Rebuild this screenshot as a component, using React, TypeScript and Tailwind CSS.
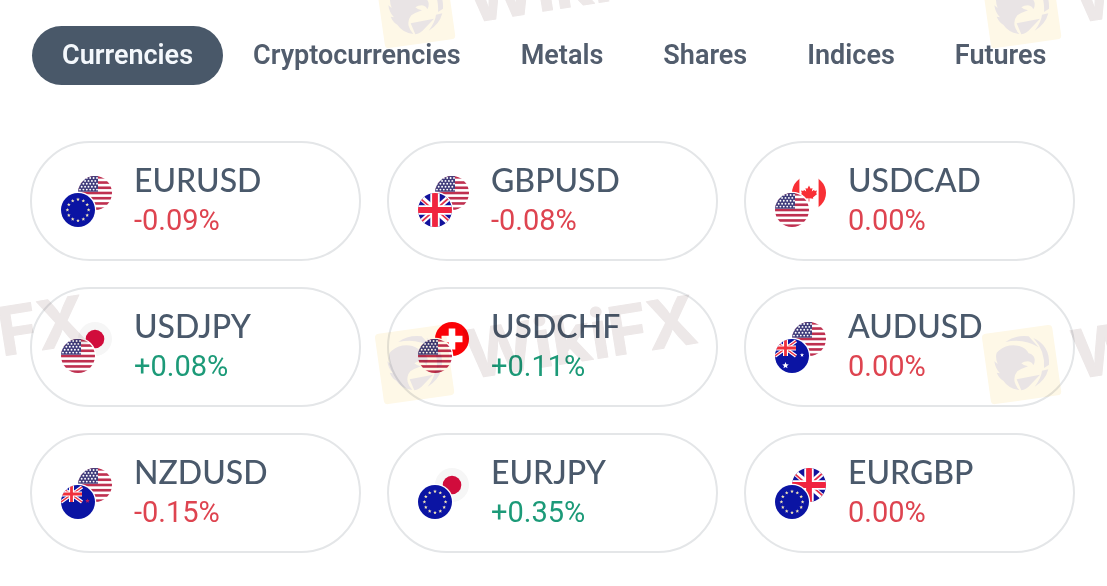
import { useId, useState, type ReactNode } from "react";

type FlagCode = "us" | "eu" | "gb" | "ca" | "jp" | "ch" | "au" | "nz";

const tabs = ["Currencies", "Cryptocurrencies", "Metals", "Shares", "Indices", "Futures"];

const pairs: { name: string; change: string; front: FlagCode; back: FlagCode }[] = [
  { name: "EURUSD", change: "-0.09%", front: "eu", back: "us" },
  { name: "GBPUSD", change: "-0.08%", front: "gb", back: "us" },
  { name: "USDCAD", change: "0.00%", front: "us", back: "ca" },
  { name: "USDJPY", change: "+0.08%", front: "us", back: "jp" },
  { name: "USDCHF", change: "+0.11%", front: "us", back: "ch" },
  { name: "AUDUSD", change: "0.00%", front: "au", back: "us" },
  { name: "NZDUSD", change: "-0.15%", front: "nz", back: "us" },
  { name: "EURJPY", change: "+0.35%", front: "eu", back: "jp" },
  { name: "EURGBP", change: "0.00%", front: "eu", back: "gb" },
];

function star(cx: number, cy: number, r: number) {
  return Array.from({ length: 10 }, (_, i) => {
    const a = (Math.PI * i) / 5 - Math.PI / 2;
    const d = i % 2 ? r * 0.45 : r;
    return `${(cx + d * Math.cos(a)).toFixed(2)},${(cy + d * Math.sin(a)).toFixed(2)}`;
  }).join(" ");
}

function UnionCanton() {
  return (
    <>
      <path d="M0 2L21 17M21 2L0 17" stroke="#fff" strokeWidth="3.4" />
      <path d="M0 2L21 17M21 2L0 17" stroke="#ee3344" strokeWidth="1.5" />
      <path d="M10.5 0V17M0 9H21" stroke="#fff" strokeWidth="5" />
      <path d="M10.5 0V17M0 9H21" stroke="#f0303c" strokeWidth="2.8" />
    </>
  );
}

const flags: Record<FlagCode, ReactNode> = {
  us: (
    <>
      <rect width="34" height="34" fill="#fff" />
      {[0, 1, 2, 3, 4, 5, 6].map((i) => (
        <rect key={i} y={i * 5.23} width="34" height="2.62" fill="#bf3050" />
      ))}
      <rect width="20" height="15.7" fill="#413d7c" />
      {[0, 1, 2, 3, 4].map((row) =>
        [0, 1, 2, 3, 4, 5].map((col) => (
          <circle key={`${row}-${col}`} cx={2 + col * 3.4 - (row % 2 ? 1.7 : 0)} cy={2 + row * 2.9} r="0.95" fill="#fff" />
        )),
      )}
    </>
  ),
  eu: (
    <>
      <rect width="34" height="34" fill="#0b14a3" />
      {Array.from({ length: 12 }, (_, i) => (
        <polygon
          key={i}
          points={star(17 + 10.6 * Math.sin((i * Math.PI) / 6), 17 - 10.6 * Math.cos((i * Math.PI) / 6), 1.9)}
          fill="#f3e6b8"
        />
      ))}
    </>
  ),
  gb: (
    <>
      <rect width="34" height="34" fill="#12129c" />
      <path d="M0 2L34 32M34 2L0 32" stroke="#fff" strokeWidth="5.6" />
      <path d="M0 3.4L15 16.6M19 15.4L34 2.2M34 30.6L19 17.4M15 18.6L0 31.8" stroke="#e5304a" strokeWidth="1.8" />
      <path d="M17 0V34M0 17H34" stroke="#fff" strokeWidth="9.4" />
      <path d="M17 0V34M0 17H34" stroke="#f02440" strokeWidth="5.8" />
    </>
  ),
  ca: (
    <>
      <rect width="34" height="34" fill="#fff" />
      <rect width="7.4" height="34" fill="#f82f35" />
      <rect x="26.6" width="7.4" height="34" fill="#f82f35" />
      <path
        d="M17 9.6L18.7 12.8L20.5 11.9L19.8 15.6L22.1 13.8L22.6 15L25 14.6L24.1 17.2L25.2 18L20.9 21.4L21.3 22.7L17.4 22.2V25.4H16.6V22.2L12.7 22.7L13.1 21.4L8.8 18L9.9 17.2L9 14.6L11.4 15L11.9 13.8L14.2 15.6L13.5 11.9L15.3 12.8Z"
        fill="#f82f35"
      />
    </>
  ),
  jp: (
    <>
      <rect width="34" height="34" fill="#f6f6f6" />
      <circle cx="17" cy="17" r="9.3" fill="#d10c3c" />
    </>
  ),
  ch: (
    <>
      <rect width="34" height="34" fill="#fb0207" />
      <path d="M17 6.5V27.5M6.5 17H27.5" stroke="#fff" strokeWidth="6.6" />
    </>
  ),
  au: (
    <>
      <rect width="34" height="34" fill="#0b14a3" />
      <UnionCanton />
      <polygon points={star(10.5, 26.5, 3.4)} fill="#fff" />
      <polygon points={star(27, 16, 2.1)} fill="#fff" />
    </>
  ),
  nz: (
    <>
      <rect width="34" height="34" fill="#0b14a3" />
      <UnionCanton />
      <polygon points={star(26.5, 15.8, 2.4)} fill="#b01c5c" />
    </>
  ),
};

function PairIcon({ front, back }: { front: FlagCode; back: FlagCode }) {
  const id = useId();
  return (
    <svg viewBox="0 0 51 51" className="size-[51px] shrink-0" aria-hidden="true">
      <clipPath id={id}>
        <circle cx="17" cy="17" r="17" />
      </clipPath>
      <g transform="translate(17 0)">
        <g clipPath={`url(#${id})`}>{flags[back]}</g>
      </g>
      <circle cx="17" cy="34" r="18.3" fill="#fff" />
      <g transform="translate(0 17)">
        <g clipPath={`url(#${id})`}>{flags[front]}</g>
      </g>
    </svg>
  );
}

function Watermark({ className }: { className: string }) {
  return (
    <svg
      viewBox="0 0 340 150"
      className={`pointer-events-none absolute h-[150px] w-[340px] mix-blend-multiply ${className}`}
      aria-hidden="true"
    >
      <rect x="9" y="60" width="71" height="71" rx="4" fill="#fef8e7" transform="rotate(-8 45 95)" />
      <g transform="translate(45 95) scale(0.3333) translate(-814 -254)" fill="#e9e4e5">
        <path d="M764 188Q794 166 834 171L864 204Q820 176 764 188Z" />
        <path d="M848 176Q898 198 895 256L880 266Q884 214 848 176Z" />
        <path d="M893 270Q884 304 852 322Q872 296 874 274Z" />
        <path d="M798 300L868 286L838 318Q826 332 812 333Z" />
        <path d="M744 214Q772 192 806 200Q826 206 834 222Q850 226 852 240Q853 250 848 258Q844 248 832 246Q820 246 812 252Q820 260 832 261Q812 268 800 276Q788 290 792 308Q796 322 806 332Q774 328 758 304Q746 298 738 280L748 282Q734 268 731 246L741 254Q733 236 738 220Z" />
      </g>
      <text
        x="99"
        y="110"
        transform="rotate(-9 99 110)"
        className="font-['Inter',sans-serif] text-[67px] font-bold"
        fill="#ede8e8"
        stroke="#ede8e8"
        strokeWidth="1"
        strokeLinejoin="round"
      >
        WikiFX
      </text>
    </svg>
  );
}

function changeColor(change: string) {
  return change.startsWith("+") ? "text-[#1c9a78]" : "text-[#de4450]";
}

export default function App() {
  const [active, setActive] = useState("Currencies");

  return (
    <main className="relative min-h-screen overflow-hidden bg-white pt-[26px] pr-8 pb-[33px] pl-[30px] font-['Roboto',sans-serif]">
      <div role="tablist" aria-label="Markets" className="flex pl-0.5">
        {tabs.map((tab) => (
          <button
            key={tab}
            type="button"
            role="tab"
            aria-selected={tab === active}
            onClick={() => setActive(tab)}
            className={`h-[59px] rounded-full px-[30px] text-[27px] font-semibold ${
              tab === active ? "bg-[#495869] text-[#f4f8fc]" : "text-[#525d6d]"
            }`}
          >
            {tab}
          </button>
        ))}
      </div>

      <ul className="mt-14 grid grid-cols-3 gap-[26px]">
        {pairs.map((pair) => (
          <li key={pair.name} className="flex h-[120px] items-center gap-[22px] rounded-full border-2 border-[#e4e6e8] pl-[29px]">
            <PairIcon front={pair.front} back={pair.back} />
            <div className="pb-0.5 leading-10">
              <h2 className="font-['Lato',sans-serif] text-[32px] font-medium text-[#4a596b]">{pair.name}</h2>
              <p className={`text-[29px] ${changeColor(pair.change)}`}>{pair.change}</p>
            </div>
          </li>
        ))}
      </ul>

      <Watermark className="-top-[87px] left-[371px]" />
      <Watermark className="-top-[87px] left-[977px]" />
      <Watermark className="top-[269px] -left-[240px]" />
      <Watermark className="top-[269px] left-[370px]" />
      <Watermark className="top-[269px] left-[977px]" />
    </main>
  );
}
